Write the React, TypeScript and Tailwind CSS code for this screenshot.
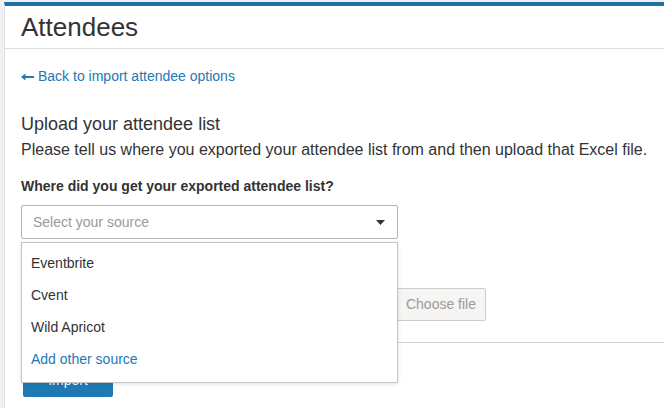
import React from 'react';

const sources = ['Eventbrite', 'Cvent', 'Wild Apricot'];

function SourceSelect() {
  return (
    <div className="relative mt-[9px] w-[377px]">
      <div className="flex h-[34px] items-center justify-between rounded-[2px] border border-[#b4b4b4] bg-white pl-[11px] pr-[12px]">
        <span className="text-[14px] text-[#9a9a9a]">Select your source</span>
        <svg width="9" height="5" viewBox="0 0 9 5" className="mt-[1px]">
          <path d="M0 0 H9 L4.5 5 Z" fill="#333333" />
        </svg>
      </div>
      {/* open options list lies over the rest of the form */}
      <ul className="absolute left-0 top-[37px] z-10 w-[377px] border border-[#c4c4c4] bg-white pb-[7px] pt-[4px] shadow-[0_1px_4px_rgba(0,0,0,0.12)]">
        {sources.map((s) => (
          <li key={s} className="flex h-8 items-center pl-[9px] text-[14px] text-[#333333]">
            {s}
          </li>
        ))}
        <li className="flex h-8 items-center pl-[9px] text-[14px] text-[#2279b4]">Add other source</li>
      </ul>
    </div>
  );
}

export default function App() {
  return (
    <div className="h-[408px] overflow-hidden bg-[#eef0f4] pl-[4px] pt-[2px] font-['Liberation_Sans',Arial,sans-serif]">
      <div className="h-[420px] w-[720px] border-l border-t-4 border-[#dcdfe3] border-t-[#1e6fa3] bg-white">
        <div className="flex h-[43px] items-center border-b border-[#dddddd] pl-4">
          <h1 className="text-[26px] leading-none text-[#333333]">Attendees</h1>
        </div>
        <div className="pl-4 pt-[17px]">
          <a className="flex items-center gap-[4px] text-[14px] leading-5 text-[#2279b4]">
            <svg width="13" height="8" viewBox="0 0 13 8" className="mt-[1px]">
              <path d="M0 4 L4.5 0.5 V3 H13 V5 H4.5 V7.5 Z" fill="#2279b4" />
            </svg>
            Back to import attendee options
          </a>
          <h2 className="mt-[26px] text-[18px] leading-6 text-[#333333]">Upload your attendee list</h2>
          <p className="mt-[3px] text-[16px] leading-[22px] text-[#333333]">
            Please tell us where you exported your attendee list from and then upload that Excel file.
          </p>
          <label className="mt-[15px] block text-[14px] font-bold leading-5 text-[#333333]">
            Where did you get your exported attendee list?
          </label>
          <SourceSelect />
          {/* file field label sits under the open list */}
          <div className="mt-[15px] h-5" />
          <div className="mt-[14px] flex h-[33px]">
            <div className="w-[376px] rounded-l-[2px] border border-[#cccccc] bg-white" />
            <div className="flex w-[89px] items-center justify-center rounded-r-[2px] border border-l-0 border-[#cccccc] bg-[#f6f5f4] text-[14px] text-[#9a9a9a]">
              Choose file
            </div>
          </div>
          <div className="mt-[21px] h-px w-full bg-[#d4d4d4]" />
          <button className="ml-[2px] mt-[21px] flex h-[33px] w-[90px] items-center justify-center rounded-[2px] bg-[#1f7ab4] text-[14px] text-white">
            Import
          </button>
        </div>
      </div>
    </div>
  );
}
